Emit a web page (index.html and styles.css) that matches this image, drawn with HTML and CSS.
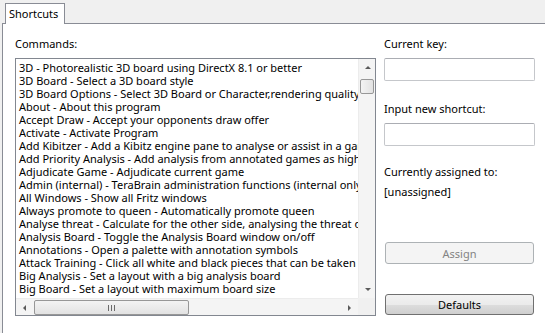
FILE: index.html
```html
<!DOCTYPE html>
<html lang="en">
<head>
    <meta charset="UTF-8">
    <title>Shortcuts</title>
    <link rel="stylesheet" href="styles.css">
</head>
<body>
    <div class="tabstrip">
        <div class="tab">Shortcuts</div>
    </div>

    <div class="panel">
        <div class="left">
            <div class="label">Commands:</div>
            <div class="listbox">
                <div class="list-row">
                    <ul class="items">
                        <li>3D - Photorealistic 3D board using DirectX 8.1 or better</li>
                        <li>3D Board - Select a 3D board style</li>
                        <li>3D Board Options - Select 3D Board or Character,rendering quality and more</li>
                        <li>About - About this program</li>
                        <li>Accept Draw - Accept your opponents draw offer</li>
                        <li>Activate - Activate Program</li>
                        <li>Add Kibitzer - Add a Kibitz engine pane to analyse or assist in a game</li>
                        <li>Add Priority Analysis - Add analysis from annotated games as high priority</li>
                        <li>Adjudicate Game - Adjudicate current game</li>
                        <li>Admin (internal) - TeraBrain administration functions (internal only)</li>
                        <li>All Windows - Show all Fritz windows</li>
                        <li>Always promote to queen - Automatically promote queen</li>
                        <li>Analyse threat - Calculate for the other side, analysing the threat of the move</li>
                        <li>Analysis Board - Toggle the Analysis Board window on/off</li>
                        <li>Annotations - Open a palette with annotation symbols</li>
                        <li>Attack Training - Click all white and black pieces that can be taken</li>
                        <li>Big Analysis - Set a layout with a big analysis board</li>
                        <li>Big Board - Set a layout with maximum board size</li>
                    </ul>
                    <div class="vscroll">
                        <div class="arrow-btn"><span class="tri tri-up"></span></div>
                        <div class="vtrack">
                            <div class="vthumb"></div>
                        </div>
                        <div class="arrow-btn"><span class="tri tri-down"></span></div>
                    </div>
                </div>
                <div class="hscroll-row">
                    <div class="hscroll">
                        <div class="arrow-btn side"><span class="tri tri-left"></span></div>
                        <div class="htrack">
                            <div class="hthumb"><span class="grip"></span><span class="grip"></span><span class="grip"></span></div>
                        </div>
                        <div class="arrow-btn side"><span class="tri tri-right"></span></div>
                    </div>
                    <div class="corner"></div>
                </div>
            </div>
        </div>

        <div class="right">
            <div class="label">Current key:</div>
            <div class="textbox"></div>
            <div class="label gap-lg">Input new shortcut:</div>
            <div class="textbox"></div>
            <div class="label gap-md">Currently assigned to:</div>
            <div class="label gap-sm">[unassigned]</div>
            <button class="btn btn-disabled assign">Assign</button>
            <button class="btn defaults">Defaults</button>
        </div>
    </div>
</body>
</html>
```

FILE: styles.css
```css
* {
    margin: 0;
    padding: 0;
    box-sizing: border-box;
}

body {
    font-family: "Noto Sans", "Open Sans", sans-serif;
    font-size: 11px;
    color: #000;
    background: #f0f0f0;
    width: 545px;
    height: 333px;
    overflow: hidden;
    display: flex;
    flex-direction: column;
}

/* Tab strip */
.tabstrip {
    height: 23px;
    padding-left: 5px;
    display: flex;
    align-items: flex-end;
}

.tab {
    width: 60px;
    height: 21px;
    margin-bottom: -1px;
    padding: 2px 0 0 3px;
    background: #fff;
    border: 1px solid #898c95;
    border-bottom: none;
    position: relative;
    z-index: 1;
    line-height: 15px;
}

.panel {
    flex: 1;
    margin-left: 2px;
    background: #fff;
    border-top: 1px solid #898c95;
    border-left: 1px solid #898c95;
    padding: 12px 0 0 12px;
    display: flex;
    gap: 8px;
}

.label {
    line-height: 15px;
    height: 15px;
    white-space: nowrap;
}

/* Commands list */
.left {
    width: 361px;
}

.listbox {
    margin-top: 7px;
    height: 258px;
    border: 1px solid #828790;
    display: flex;
    flex-direction: column;
}

.list-row {
    flex: 1;
    display: flex;
    min-height: 0;
}

.items {
    flex: 1;
    list-style: none;
    overflow: hidden;
    padding: 2px 0 0 3px;
}

.items li {
    height: 13px;
    line-height: 13px;
    white-space: nowrap;
}

.vscroll {
    width: 17px;
    background: #f4f4f4;
    border-left: 1px solid #ececec;
    display: flex;
    flex-direction: column;
}

.arrow-btn {
    width: 17px;
    height: 17px;
    display: flex;
    align-items: center;
    justify-content: center;
    flex-shrink: 0;
}

.vtrack {
    flex: 1;
    padding: 3px 1px 0;
}

.vthumb {
    height: 15px;
    border: 1px solid #979797;
    border-radius: 2px;
    background: linear-gradient(to right, #f3f3f3, #e2e2e2);
}

.hscroll-row {
    height: 17px;
    display: flex;
}

.hscroll {
    flex: 1;
    display: flex;
    background: #f4f4f4;
    border-top: 1px solid #ececec;
}

.htrack {
    flex: 1;
    padding: 1px 0 0 1px;
}

.hthumb {
    width: 155px;
    height: 15px;
    border: 1px solid #979797;
    border-radius: 2px;
    background: linear-gradient(to bottom, #f3f3f3, #e2e2e2);
    display: flex;
    align-items: center;
    justify-content: center;
    gap: 2px;
}

.grip {
    width: 1px;
    height: 6px;
    background: #6b6b6b;
}

.corner {
    width: 17px;
    background: #f0f0f0;
}

.tri {
    width: 0;
    height: 0;
    border: 3px solid transparent;
}

.tri-up {
    border-bottom: 3px solid #5a5a5a;
    border-top-width: 0;
}

.tri-down {
    border-top: 3px solid #5a5a5a;
    border-bottom-width: 0;
}

.tri-left {
    border-right: 3px solid #5a5a5a;
    border-left-width: 0;
}

.tri-right {
    border-left: 3px solid #5a5a5a;
    border-right-width: 0;
}

/* Right column */
.right {
    width: 151px;
    display: flex;
    flex-direction: column;
}

.textbox {
    margin-top: 7px;
    height: 23px;
    border: 1px solid #c5c7cb;
    border-top-color: #abadb3;
    border-radius: 2px;
    background: #fff;
}

.gap-lg {
    margin-top: 20px;
}

.gap-md {
    margin-top: 18px;
}

.gap-sm {
    margin-top: 5px;
}

.btn {
    font-family: inherit;
    font-size: 11px;
    width: 149px;
    margin-left: 1px;
    height: 22px;
    border: 1px solid #707070;
    border-radius: 3px;
    background: linear-gradient(to bottom, #f2f2f2 0%, #ebebeb 50%, #dddddd 51%, #cfcfcf 100%);
    color: #000;
}

.btn-disabled {
    background: #f4f4f4;
    border-color: #adb2b5;
    color: #838383;
}

.assign {
    margin-top: 43px;
}

.defaults {
    margin-top: 30px;
    height: 21px;
}
```
